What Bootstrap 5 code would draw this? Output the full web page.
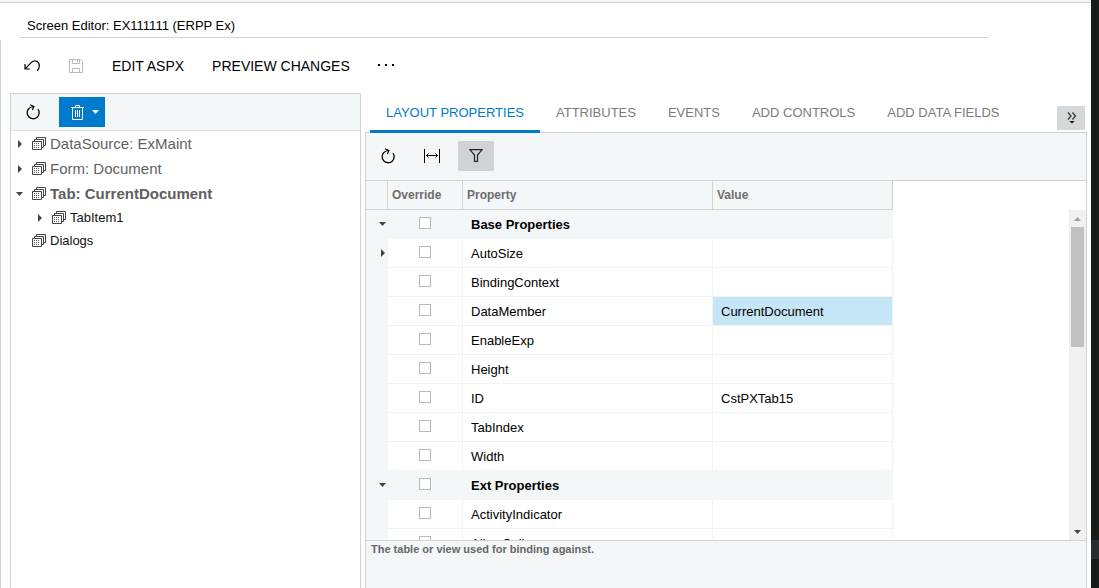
<!DOCTYPE html>
<html lang="en">
<head>
<meta charset="utf-8">
<meta name="viewport" content="width=device-width, initial-scale=1">
<title>Screen Editor: EX111111 (ERPP Ex)</title>
<link href="https://cdn.jsdelivr.net/npm/bootstrap@5.3.0/dist/css/bootstrap.min.css" rel="stylesheet">
<style>
  :root { --line: #d0d2d4; --tint: #f3f7f8; --blue: #007acc; --hair: #f0f4f5; }
  body { font-family: "Liberation Sans", Arial, sans-serif; font-size: 13px; line-height: 16px; color: #000; }
  svg { display: block; }
  .top-strip { height: 3px; background: var(--tint); border-bottom: 1px solid var(--line); }
  .edge { width: 8px; background: #191a1a; }
  .edge-mark { height: 19px; margin-bottom: 29px; background: #292d31; }
  .screen-title { font-size: 13px; line-height: 16px; padding: 15px 7px 3px; margin: 0 103px 0 20px; border-bottom: 1px solid var(--line); }
  .workspace { border-left: 1px solid var(--line); margin-top: 2px; }
  .tool-btn { --bs-btn-padding-x: 0; --bs-btn-padding-y: 0; --bs-btn-border-radius: 0; --bs-btn-border-width: 0; --bs-btn-font-size: 14px; --bs-btn-color: #000; line-height: 16px; display: inline-flex; align-items: center; justify-content: center; }
  .tool-btn:disabled { opacity: 1; color: #b8babc; }
  .command-bar { height: 55px; padding: 0 23px 2px; }
  .tree-panel { width: 351px; border: 1px solid var(--line); border-bottom: 0; margin-left: 9px; }
  .tree-bar { height: 37px; background: var(--tint); border-bottom: 1px solid #dfe1e3; padding: 0 14px; gap: 18px; }
  .delete-btn { width: 46px; height: 30px; background: var(--blue); color: #fff; gap: 8px; padding-left: 6px; }
  .tree-row { height: 23px; padding-left: 5px; gap: 4px; }
  .tree-main { height: 25px; }
  .tree-main a { font-size: 15px; }
  .tree-row a { color: #111; text-decoration: none; }
  .tree-row.tree-main a { color: #5f5f5f; }
  .tree-child { padding-left: 25px; }
  .twisty { width: 7px; height: 8px; margin-right: 5px; fill: #444; flex: none; }
  .prop-tabs { height: 40px; padding-left: 5px; margin-bottom: -1px; position: relative; border: 0; }
  .prop-tabs .nav-link { padding: 0 16px; border: 0; margin: 0; height: 40px; line-height: 40px; font-size: 13px; color: #7b7b7b; border-bottom: 3px solid transparent; border-radius: 0; background: none; }
  .prop-tabs .nav-link.active { color: var(--blue); border-bottom-color: var(--blue); background: none; }
  .more-btn { width: 28px; height: 24px; background: #d5d8da; margin: 13px 2px 0 0; padding-left: 2px; }
  .prop-panel { margin: 0 4px; }
  .prop-body { border: 1px solid var(--line); border-bottom: 0; background: var(--tint); }
  .prop-bar { height: 47px; padding: 0 0 2px 14px; }
  .filter-btn { width: 36px; height: 30px; background: #d0d3d6; margin-left: 18px; }
  .grid-area { background: #fff; border-top: 1px solid var(--line); border-bottom: 1px solid var(--line); }
  .prop-table { width: 527px; table-layout: fixed; border-collapse: separate; border-spacing: 0; margin: 0; }
  .prop-table > :not(caption) > * > * { height: 29px; padding: 0; border-bottom: 1px solid var(--hair); border-right: 1px solid var(--hair); vertical-align: middle; color: #000; white-space: nowrap; background: #fff; }
  .prop-table > thead > tr > th { background: var(--tint); color: #6e6e6e; border-color: var(--line); padding-left: 4px; font-size: 12px; }
  .prop-table > tbody > tr > .indent, .prop-table > tbody > .group-row > * { background: var(--tint); border-color: var(--tint); }
  .prop-table > tbody > tr > .name, .prop-table > tbody > tr > .val { padding-left: 8px; padding-top: 1px; }
  .prop-table > tbody > tr > .picked { background: #c5e6f7; }
  .indent svg { margin: 0 auto 0 13px; fill: #444; }
  .prop-table .form-check-input { display: block; width: 12px; height: 12px; margin: 0 auto 2px; border: 1px solid #b8b8b8; border-radius: 0; background-color: #fff; }
  .scroll-track { width: 17px; margin-top: 29px; background: #f0f0f0; }
  .scroll-cap { height: 17px; display: flex; align-items: center; justify-content: center; }
  .scroll-thumb { width: 13px; height: 120px; margin: 0 auto; background: #c1c1c1; }
  .hint { height: 47px; padding: 0 5px; font-size: 11px; font-weight: bold; color: #666; }
</style>
</head>
<body class="vh-100 d-flex overflow-hidden bg-white">
<svg class="d-none" xmlns="http://www.w3.org/2000/svg">
  <symbol id="i-reload" viewBox="0 0 16 16"><path d="M3.900 4.500A6 6 0 1 0 13 5.200" fill="none" stroke="currentColor" stroke-width="1.300"/><path d="M5 .8 8.900 2.500 7.400 6M3.900 4.500Q5.500 2.800 8.900 2.500" fill="none" stroke="currentColor" stroke-width="1.200"/></symbol>
  <symbol id="i-form" viewBox="0 0 14 14"><path d="M.5 4.500h9v8h-9zM2.500 4V2.500h9v8H10M4.500 2V.5h9v8H12" fill="none" stroke="#444"/><path d="M2 6.500h6M2 8.500h6M2 10.500h6" stroke="#555" stroke-dasharray="1 1"/></symbol>
  <symbol id="i-right" viewBox="0 0 7 8"><path d="M2 0 6 4 2 8z"/></symbol>
  <symbol id="i-down" viewBox="0 0 7 8"><path d="M0 2h7L3.500 6z"/></symbol>
</svg>

<div class="flex-grow-1 d-flex flex-column overflow-hidden">
  <div class="top-strip"></div>
  <h1 class="screen-title fw-normal">Screen Editor: EX111111 (ERPP Ex)</h1>

  <main class="workspace flex-grow-1 d-flex flex-column overflow-hidden">
    <div class="command-bar d-flex align-items-center" role="toolbar" aria-label="Screen commands">
      <button type="button" class="btn tool-btn" aria-label="Undo">
        <svg width="17" height="14" viewBox="0 0 17 14" fill="none" stroke="#000" stroke-width="1.200"><path d="M1 5v5h5M1.400 9.600 7.600 3.200C11 .2 15.500 2.600 15.300 7c0 2-.8 3.400-2.200 4.800"/></svg>
      </button>
      <button type="button" class="btn tool-btn ms-4" aria-label="Save" disabled>
        <svg class="ms-1" width="15" height="14" viewBox="0 0 15 14" fill="none" stroke="#b8babc"><path d="M.5.500h11l2 2v11H.5zM3.500.5v4h7v-4M8.500 1v2M3.500 13V9.500h7V13"/></svg>
      </button>
      <button type="button" class="btn tool-btn ms-4 ps-1">EDIT ASPX</button>
      <button type="button" class="btn tool-btn ms-4 ps-1">PREVIEW CHANGES</button>
      <button type="button" class="btn tool-btn ms-4 ps-1" aria-label="More">
        <svg width="16" height="4" viewBox="0 0 16 4"><path d="M0 0h2v2H0zM7 0h2v2H7zM14 0h2v2h-2z"/></svg>
      </button>
    </div>

    <div class="flex-grow-1 d-flex overflow-hidden">
      <aside class="tree-panel flex-shrink-0">
        <div class="tree-bar d-flex align-items-center">
          <button type="button" class="btn tool-btn" aria-label="Refresh tree"><svg width="16" height="16"><use href="#i-reload"/></svg></button>
          <button type="button" class="btn tool-btn delete-btn" aria-label="Delete">
            <svg width="13" height="15" viewBox="0 0 13 15" fill="none" stroke="#fff"><path d="M0 2.500h13M4.500 2V.5h4V2M1.500 3v11.500h10V3M4.500 5v7M6.500 5v7M8.500 5v7"/></svg>
            <svg width="7" height="8" fill="#fff"><use href="#i-down"/></svg>
          </button>
        </div>
        <div>
          <div class="tree-row tree-main d-flex align-items-center"><svg class="twisty"><use href="#i-right"/></svg><svg width="14" height="14"><use href="#i-form"/></svg><a href="#">DataSource: ExMaint</a></div>
          <div class="tree-row tree-main d-flex align-items-center"><svg class="twisty"><use href="#i-right"/></svg><svg width="14" height="14"><use href="#i-form"/></svg><a href="#">Form: Document</a></div>
          <div class="tree-row tree-main d-flex align-items-center"><svg class="twisty"><use href="#i-down"/></svg><svg width="14" height="14"><use href="#i-form"/></svg><a href="#" class="fw-bold">Tab: CurrentDocument</a></div>
          <div class="tree-row tree-child d-flex align-items-center"><svg class="twisty"><use href="#i-right"/></svg><svg width="14" height="14"><use href="#i-form"/></svg><a href="#">TabItem1</a></div>
          <div class="tree-row d-flex align-items-center"><span class="twisty"></span><svg width="14" height="14"><use href="#i-form"/></svg><a href="#">Dialogs</a></div>
        </div>
      </aside>

      <section class="prop-panel flex-grow-1 d-flex flex-column overflow-hidden">
        <div class="d-flex justify-content-between flex-shrink-0">
          <ul class="nav nav-tabs prop-tabs">
            <li class="nav-item"><a class="nav-link active" href="#">LAYOUT PROPERTIES</a></li>
            <li class="nav-item"><a class="nav-link" href="#">ATTRIBUTES</a></li>
            <li class="nav-item"><a class="nav-link" href="#">EVENTS</a></li>
            <li class="nav-item"><a class="nav-link" href="#">ADD CONTROLS</a></li>
            <li class="nav-item"><a class="nav-link" href="#">ADD DATA FIELDS</a></li>
          </ul>
          <button type="button" class="btn tool-btn more-btn" aria-label="More tabs">
            <svg width="10" height="12" viewBox="0 0 10 12"><path d="M1 .5 4 4 1 7.500M5.500.5l3 3.500-3 3.500" fill="none" stroke="#333" stroke-width="1.200"/><path d="M2.500 9h5L5 11.500z"/></svg>
          </button>
        </div>
        <div class="prop-body flex-grow-1 d-flex flex-column overflow-hidden">
          <div class="prop-bar d-flex align-items-center flex-shrink-0" role="toolbar" aria-label="Property commands">
            <button type="button" class="btn tool-btn" aria-label="Refresh"><svg width="16" height="16"><use href="#i-reload"/></svg></button>
            <button type="button" class="btn tool-btn ms-4 ps-1" aria-label="Fit columns">
              <svg width="16" height="14" viewBox="0 0 16 14" fill="none" stroke="#000"><path d="M.5 0v14M15.500 0v14M2 6.500h12M4.500 4.500l-2 2 2 2M11.500 4.500l2 2-2 2"/></svg>
            </button>
            <button type="button" class="btn tool-btn filter-btn" aria-label="Filter">
              <svg width="14" height="13" viewBox="0 0 14 13" fill="none" stroke="#222" stroke-width="1.200"><path d="M.8.6h12.400L8.500 6v6.400h-3V6z"/></svg>
            </button>
          </div>
          <div class="grid-area flex-grow-1 d-flex justify-content-between overflow-hidden">
            <div class="overflow-hidden">
              <table class="table prop-table">
                <colgroup><col style="width:22px"><col style="width:75px"><col style="width:250px"><col style="width:180px"></colgroup>
                <thead><tr><th></th><th>Override</th><th>Property</th><th>Value</th></tr></thead>
                <tbody id="rows"></tbody>
              </table>
            </div>
            <div class="scroll-track d-flex flex-column flex-shrink-0">
              <div class="scroll-cap"><svg width="7" height="4"><path d="M0 4h7L3.500 0z" fill="#a0a0a0"/></svg></div>
              <div class="scroll-thumb"></div>
              <div class="scroll-cap mt-auto"><svg width="7" height="4"><path d="M0 0h7L3.500 4z" fill="#444"/></svg></div>
            </div>
          </div>
          <div class="hint flex-shrink-0">The table or view used for binding against.</div>
        </div>
      </section>
    </div>
  </main>
</div>
<div class="edge d-flex flex-column justify-content-end flex-shrink-0"><div class="edge-mark"></div></div>

<script src="https://cdn.jsdelivr.net/npm/bootstrap@5.3.0/dist/js/bootstrap.bundle.min.js"></script>
<script>
  const props = [
    { name: 'Base Properties', group: true, twisty: 'down' },
    { name: 'AutoSize', twisty: 'right' },
    { name: 'BindingContext' },
    { name: 'DataMember', value: 'CurrentDocument', picked: true },
    { name: 'EnableExp' },
    { name: 'Height' },
    { name: 'ID', value: 'CstPXTab15' },
    { name: 'TabIndex' },
    { name: 'Width' },
    { name: 'Ext Properties', group: true, twisty: 'down' },
    { name: 'ActivityIndicator' },
    { name: 'AllowCollapse' }
  ];
  document.getElementById('rows').innerHTML = props.map(p => `
    <tr class="${p.group ? 'group-row fw-bold' : ''}">
      <td class="indent">${p.twisty ? `<svg width="7" height="8"><use href="#i-${p.twisty}"/></svg>` : ''}</td>
      <td><input class="form-check-input" type="checkbox" aria-label="Override ${p.name}"></td>
      <td class="name">${p.name}</td>
      <td class="val ${p.picked ? 'picked' : ''}">${p.value || ''}</td>
    </tr>`).join('');
</script>
</body>
</html>
